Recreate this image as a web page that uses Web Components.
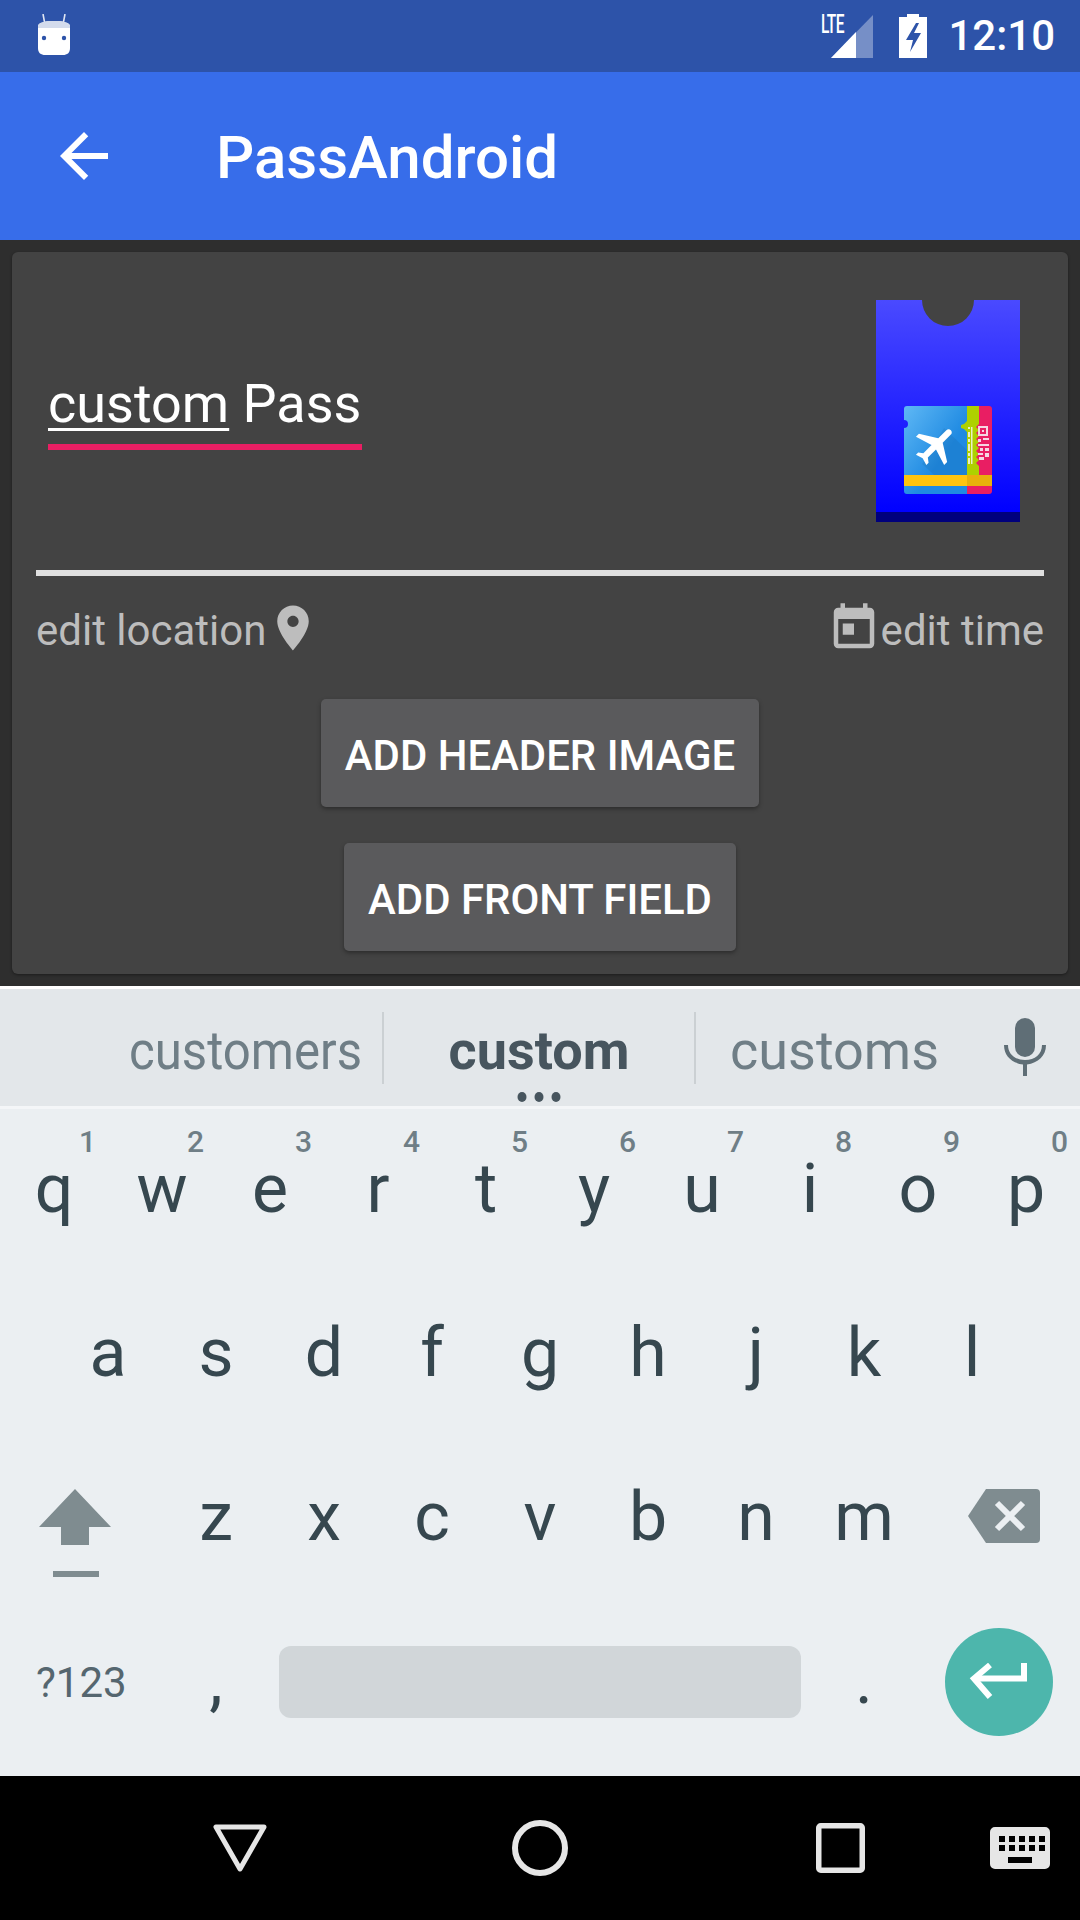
<!DOCTYPE html>
<html>
<head>
<meta charset="utf-8">
<title>PassAndroid</title>
<style>
  html, body { margin: 0; padding: 0; background: #000; }
  body { width: 1080px; height: 1920px; overflow: hidden; display: flex; flex-direction: column; font-family: Roboto, "Liberation Sans", sans-serif; }
</style>
</head>
<body>
<status-bar></status-bar>
<app-bar>PassAndroid</app-bar>
<pass-screen>
  <pass-card>
    <edit-title slot="title"></edit-title>
    <pass-thumb slot="thumb"></pass-thumb>
    <meta-row slot="meta"></meta-row>
    <flat-button slot="actions">ADD HEADER IMAGE</flat-button>
    <flat-button slot="actions">ADD FRONT FIELD</flat-button>
  </pass-card>
</pass-screen>
<candidate-bar></candidate-bar>
<soft-keyboard></soft-keyboard>
<nav-bar></nav-bar>

<script>
function shadow(el, html) {
  el.attachShadow({ mode: "open" });
  el.shadowRoot.innerHTML = html;
}

class StatusBar extends HTMLElement {
  connectedCallback() {
    shadow(this, `
      <style>
        :host { display: flex; height: 72px; flex: none; background: #2d53a9; color: #fff; align-items: center; position: relative; }
        svg { display: block; }
        .cat { margin-left: 36px; }
        .right { margin-left: auto; display: flex; align-items: center; }
        .lte { position: absolute; left: 821px; top: 12px; font: 500 25px/26px Roboto, sans-serif; letter-spacing: -1px; transform: scaleX(.62); transform-origin: left top; }
        .signal { margin-right: 26px; }
        .time { font: 500 42px/72px Roboto, sans-serif; margin: 0 25px 0 21px; letter-spacing: 0; }
      </style>
      <svg class="cat" width="36" height="44" viewBox="0 0 36 44">
        <path d="M7 0l1.500 8M29 0l-1.500 8" stroke="#dfe5f2" stroke-width="1.600" fill="none"/>
        <path d="M2 12c0-3 6-5 16-5s16 2 16 5v22c0 5-3 7-7 7H9c-4 0-7-2-7-7z" fill="#fff"/>
        <path d="M2 12c0-3 6-5 16-5s16 2 16 5v2H2z" fill="#d3dbec"/>
        <circle cx="8" cy="24" r="2.200" fill="#2d53a9"/><circle cx="28" cy="24" r="2.200" fill="#2d53a9"/>
      </svg>
      <span class="lte">LTE</span>
      <div class="right">
        <svg class="signal" width="42" height="43" viewBox="0 0 42 43">
          <path d="M42 0v43H0z" fill="#fff" opacity=".35"/>
          <path d="M25 17.100v25.900H0z" fill="#fff"/>
        </svg>
        <svg width="28" height="44" viewBox="0 0 28 44">
          <path fill-rule="evenodd" fill="#fff" d="M8 0h12v3h8v41H0V3h8zM17 9 7 26h7l-3 12 11-19h-7l5-10z"/>
        </svg>
        <span class="time">12:10</span>
      </div>
    `);
  }
}

class AppBar extends HTMLElement {
  connectedCallback() {
    shadow(this, `
      <style>
        :host { display: flex; height: 168px; flex: none; background: #376dea; color: #fff; align-items: center; padding-left: 48px; }
        svg { display: block; width: 72px; height: 72px; fill: #fff; }
        .title { margin: 3px 0 0 96px; font: 500 60px/64px Roboto, sans-serif; }
      </style>
      <svg viewBox="0 0 24 24"><path d="M20 11H7.830l5.590-5.590L12 4l-8 8 8 8 1.410-1.410L7.830 13H20v-2z"/></svg>
      <span class="title"><slot></slot></span>
    `);
  }
}

class PassScreen extends HTMLElement {
  connectedCallback() {
    shadow(this, `
      <style>
        :host { display: block; height: 746px; flex: none; box-sizing: border-box; background: #2e2e2e; padding: 12px 12px 0; }
      </style>
      <slot></slot>
    `);
  }
}

class PassCard extends HTMLElement {
  connectedCallback() {
    shadow(this, `
      <style>
        :host { display: block; height: 722px; box-sizing: border-box; background: #434343; border-radius: 6px; box-shadow: 0 1px 3px rgba(0,0,0,.4); padding: 48px 24px 0; }
        .top { display: flex; justify-content: space-between; height: 222px; padding: 0 24px 0 12px; }
        .rule { height: 6px; background: #e0e0e0; margin-top: 48px; }
        .actions { display: flex; flex-direction: column; align-items: center; gap: 36px; margin-top: 0; }
      </style>
      <div class="top">
        <slot name="title"></slot>
        <slot name="thumb"></slot>
      </div>
      <div class="rule"></div>
      <slot name="meta"></slot>
      <div class="actions"><slot name="actions"></slot></div>
    `);
  }
}

class EditTitle extends HTMLElement {
  connectedCallback() {
    shadow(this, `
      <style>
        :host { display: block; margin-top: 72px; color: #fff; font: 400 54px/64px Roboto, sans-serif; }
        .text { display: block; height: 64px; }
        u { text-decoration-thickness: 3px; text-underline-offset: 6px; text-decoration-skip-ink: none; }
        .line { height: 6px; background: #e91e63; margin-top: 8px; }
      </style>
      <span class="text"><u>custom</u> Pass</span>
      <div class="line"></div>
    `);
  }
}

class PassThumb extends HTMLElement {
  connectedCallback() {
    shadow(this, `
      <style>
        :host { display: block; width: 144px; height: 222px; }
        svg { display: block; }
      </style>
      <svg width="144" height="222" viewBox="0 0 144 222">
        <defs>
          <linearGradient id="bg" x1="0" y1="0" x2="0" y2="1"><stop offset="0" stop-color="#4a4aff"/><stop offset="1" stop-color="#0000ff"/></linearGradient>
          <linearGradient id="blue" x1="0" y1="0" x2="1" y2="1"><stop offset="0" stop-color="#5fb8f5"/><stop offset=".6" stop-color="#1f8ae2"/></linearGradient>
        </defs>
        <path d="M0 0h46a26 26 0 0 0 52 0h46v212H0z" fill="url(#bg)"/>
        <rect y="212" width="144" height="10" fill="#00007c"/>
        <g transform="translate(28 106)">
          <path d="M60 0h25a3 3 0 0 1 3 3v82a3 3 0 0 1-3 3H60z" fill="#e91e63"/>
          <path d="M55 0h20v18l-3 3 3 3-3 3 3 3-3 3 3 3-3 3 3 3-3 3 3 3-3 3 3 3-3 3 3 3v20H55z" fill="#aed100"/>
          <path d="M3 0h60v15l-3 3-3 1v3l3 1 3 3v62H3a3 3 0 0 1-3-3V22a4 4 0 0 0 0-8V3a3 3 0 0 1 3-3z" fill="url(#blue)"/>
          <path d="M40 22l23 22v34H40L18 58z" fill="#000" opacity=".06"/>
          <g fill="#e8f0c8"><rect x="64" y="21" width="2" height="2"/><rect x="64" y="26" width="2" height="5"/><rect x="64" y="33" width="2" height="3"/><rect x="64" y="38" width="2" height="7"/><rect x="64" y="47" width="2" height="3"/><rect x="64" y="52" width="2" height="6"/><rect x="67" y="21" width="1.500" height="37"/></g>
          <g fill="#f6d5e2"><path fill-rule="evenodd" d="M74 20h10v10H74zM76 22v6h6v-6z"/><rect x="78" y="24" width="2" height="2"/><rect x="74" y="33" width="3" height="3"/><rect x="79" y="32" width="6" height="2"/><rect x="74" y="38" width="11" height="2"/><rect x="76" y="42" width="3" height="3"/><rect x="81" y="42" width="4" height="3"/><rect x="74" y="47" width="5" height="2"/><rect x="81" y="47" width="4" height="4"/><rect x="75" y="51" width="5" height="3"/></g>
          <rect y="69" width="88" height="11" fill="#ffc40f"/>
          <rect x="63" y="69" width="25" height="11" fill="#e8b00c"/>
          <path transform="translate(32 39) rotate(45) scale(2.100) translate(-11.500 -12)" fill="#fff" d="M21 16v-2l-8-5V3.500c0-.830-.670-1.500-1.500-1.500S10 2.670 10 3.500V9l-8 5v2l8-2.500V19l-2 1.500V22l3.500-1 3.500 1v-1.500L13 19v-5.500l8 2.500z"/>
        </g>
      </svg>
    `);
  }
}

class MetaRow extends HTMLElement {
  connectedCallback() {
    shadow(this, `
      <style>
        :host { display: flex; justify-content: space-between; height: 123px; padding-top: 25px; box-sizing: border-box; color: #bdbdbd; font: 400 42px/54px Roboto, sans-serif; }
        div { display: flex; align-items: flex-start; }
        span { display: block; margin-top: 3px; }
        svg { display: block; fill: #bdbdbd; width: 54px; height: 54px; flex: none; }
      </style>
      <div><span>edit location</span><svg viewBox="0 0 24 24"><path d="M12 2C8.130 2 5 5.130 5 9c0 5.250 7 13 7 13s7-7.750 7-13c0-3.870-3.130-7-7-7zm0 9.500c-1.380 0-2.500-1.120-2.500-2.500s1.120-2.500 2.500-2.500 2.500 1.120 2.500 2.500-1.120 2.500-2.500 2.500z"/></svg></div>
      <div><svg viewBox="0 0 24 24"><path d="M19 3h-1V1h-2v2H8V1H6v2H5c-1.110 0-1.990.900-1.990 2L3 19c0 1.100.890 2 2 2h14c1.100 0 2-.900 2-2V5c0-1.100-.900-2-2-2zm0 16H5V8h14v11zM7 10h5v5H7z"/></svg><span>edit time</span></div>
    `);
  }
}

class FlatButton extends HTMLElement {
  connectedCallback() {
    shadow(this, `
      <style>
        :host { display: block; height: 108px; box-sizing: border-box; padding: 0 24px; background: #5a5a5c; border-radius: 5px; box-shadow: 0 2px 4px rgba(0,0,0,.35); color: #fff; font: 500 41.900px/113px Roboto, sans-serif; white-space: nowrap; }
      </style>
      <slot></slot>
    `);
  }
}

class CandidateBar extends HTMLElement {
  connectedCallback() {
    shadow(this, `
      <style>
        :host { display: block; flex: none; background: #fff; padding-top: 3px; }
        .bar { height: 117px; background: #e3e7ea; display: grid; grid-template-columns: 384px 312px 1fr; position: relative; color: #6f7e86; font: 400 54px/117px Roboto, sans-serif; }
        .strip { height: 3px; background: #f4f6f8; }
        .c { box-sizing: border-box; height: 72px; margin-top: 23px; line-height: 78px; border-right: 2px solid #cbd0d3; white-space: nowrap; }
        .first { text-align: right; padding-right: 20px; }
        .first span { display: inline-block; transform: scaleX(.91); transform-origin: right center; }
        .mid { text-align: center; font-weight: 700; color: #47555e; }
        .last { border: 0; padding-left: 34px; }
        svg { position: absolute; display: block; }
        .mic { left: 1004px; top: 29px; }
        .dots { left: 516px; top: 103px; }
      </style>
      <div class="bar">
        <div class="c first"><span>customers</span></div>
        <div class="c mid">custom</div>
        <div class="c last">customs</div>
        <svg class="mic" width="42" height="58" viewBox="0 0 42 58" fill="#5f6e76">
          <rect x="11" y="0" width="20" height="39" rx="10"/>
          <path d="M0 27h4c0 9 7 15 17 15s17-6 17-15h4c0 11-8 18-19 19.500V58h-4V46.500C8 45 0 38 0 27z"/>
        </svg>
        <svg class="dots" width="46" height="10" viewBox="0 0 46 10" fill="#47555e">
          <ellipse cx="6" cy="5" rx="4.500" ry="5"/><ellipse cx="23" cy="5" rx="4.500" ry="5"/><ellipse cx="40" cy="5" rx="4.500" ry="5"/>
        </svg>
      </div>
      <div class="strip"></div>
    `);
  }
}

class KeyCap extends HTMLElement {
  connectedCallback() {
    const hint = this.getAttribute("hint");
    shadow(this, `
      <style>
        :host { display: block; position: relative; text-align: center; color: #36474f; font: 400 68px/80px Roboto, sans-serif; height: 100%; }
        .label { display: block; padding-top: var(--key-top, 46px); }
        .hint { position: absolute; right: 12px; top: 15px; font: 500 30px/36px Roboto, sans-serif; color: #6f7e86; }
      </style>
      ${hint ? `<span class="hint">${hint}</span>` : ""}
      <span class="label"><slot></slot></span>
    `);
  }
}

class SoftKeyboard extends HTMLElement {
  connectedCallback() {
    const row1 = "qwertyuiop".split("").map((k, i) => `<key-cap hint="${(i + 1) % 10}">${k}</key-cap>`).join("");
    const row2 = "asdfghjkl".split("").map(k => `<key-cap>${k}</key-cap>`).join("");
    const row3 = "zxcvbnm".split("").map(k => `<key-cap>${k}</key-cap>`).join("");
    shadow(this, `
      <style>
        :host { display: block; height: 667px; flex: none; background: #ebeff2; }
        .row { display: grid; height: 166.750px; grid-auto-flow: column; grid-auto-columns: 108px; }
        .r1 { --key-top: 40px; }
        .r2 { padding-left: 54px; --key-top: 37px; }
        .r3 { grid-template-columns: 162px repeat(7, 108px) 162px; --key-top: 34px; }
        .r4 { display: flex; align-items: flex-start; position: relative; --key-top: 31px; }
        .shift { display: block; margin: 46px 0 0 39px; }
        .del { display: block; margin: 46px 0 0 50px; }
        .sym { width: 162px; box-sizing: border-box; padding: 50px 0 0 36px; color: #55666f; font: 400 42px/48px Roboto, sans-serif; }
        .comma, .period { width: 108px; flex: none; }
        .space { width: 522px; height: 72px; margin: 37px 9px 0 9px; background: #d1d6d9; border-radius: 12px; flex: none; }
        .enter { width: 108px; height: 108px; margin: 19px 0 0 27px; border-radius: 50%; background: #4db6ac; flex: none; display: flex; align-items: center; justify-content: center; }
        .enter svg { margin-right: 3px; }
      </style>
      <div class="row r1">${row1}</div>
      <div class="row r2">${row2}</div>
      <div class="row r3">
        <div><svg class="shift" width="72" height="88" viewBox="0 0 72 88" fill="#7f8c90"><path d="M36 0l36 38H50v18H22V38H0z"/><rect x="14" y="82" width="46" height="6"/></svg></div>
        ${row3}
        <div><svg class="del" width="72" height="54" viewBox="0 0 72 54"><path fill="#7f8c90" d="M18 0h50a4 4 0 0 1 4 4v46a4 4 0 0 1-4 4H18L0 27z"/><path stroke="#ebeff2" stroke-width="6" d="M29 14l26 26M55 14 29 40"/></svg></div>
      </div>
      <div class="row r4">
        <div class="sym">?123</div>
        <key-cap class="comma">,</key-cap>
        <div class="space"></div>
        <key-cap class="period">.</key-cap>
        <div class="enter"><svg width="58" height="38" viewBox="0 0 58 38" fill="none" stroke="#fff" stroke-width="6"><path d="M55 0v15.500H6"/><path d="M21 2 5 15.500 21 34"/></svg></div>
      </div>
    `);
  }
}

class NavBar extends HTMLElement {
  connectedCallback() {
    shadow(this, `
      <style>
        :host { display: block; height: 144px; flex: none; background: #000; position: relative; }
        svg { position: absolute; display: block; }
        .back { left: 213px; top: 48px; }
        .home { left: 512px; top: 44px; }
        .recent { left: 816px; top: 47px; }
        .ime { left: 990px; top: 51px; }
      </style>
      <svg class="back" width="54" height="48" viewBox="0 0 54 48" fill="none" stroke="#e6e6e6" stroke-width="5" stroke-linejoin="round"><path d="M3 3h48L27 45z"/></svg>
      <svg class="home" width="56" height="56" viewBox="0 0 56 56" fill="none" stroke="#e6e6e6" stroke-width="6"><circle cx="28" cy="28" r="25"/></svg>
      <svg class="recent" width="49" height="50" viewBox="0 0 49 50" fill="none" stroke="#e6e6e6" stroke-width="5.500"><rect x="2.750" y="2.750" width="43.500" height="44.500" rx="2"/></svg>
      <svg class="ime" width="60" height="42" viewBox="0 0 60 42">
        <path fill="#e6e6e6" fill-rule="evenodd" d="M5 0h50a5 5 0 0 1 5 5v32a5 5 0 0 1-5 5H5a5 5 0 0 1-5-5V5a5 5 0 0 1 5-5zM9 9v6h6V9zm10 0v6h6V9zm10 0v6h6V9zm10 0v6h6V9zm10 0v6h6V9zM9 18v6h6v-6zm10 0v6h6v-6zm10 0v6h6v-6zm10 0v6h6v-6zm10 0v6h6v-6zM18 30v6h24v-6z"/>
      </svg>
    `);
  }
}

customElements.define("status-bar", StatusBar);
customElements.define("app-bar", AppBar);
customElements.define("pass-screen", PassScreen);
customElements.define("pass-card", PassCard);
customElements.define("edit-title", EditTitle);
customElements.define("pass-thumb", PassThumb);
customElements.define("meta-row", MetaRow);
customElements.define("flat-button", FlatButton);
customElements.define("candidate-bar", CandidateBar);
customElements.define("key-cap", KeyCap);
customElements.define("soft-keyboard", SoftKeyboard);
customElements.define("nav-bar", NavBar);
</script>
</body>
</html>
